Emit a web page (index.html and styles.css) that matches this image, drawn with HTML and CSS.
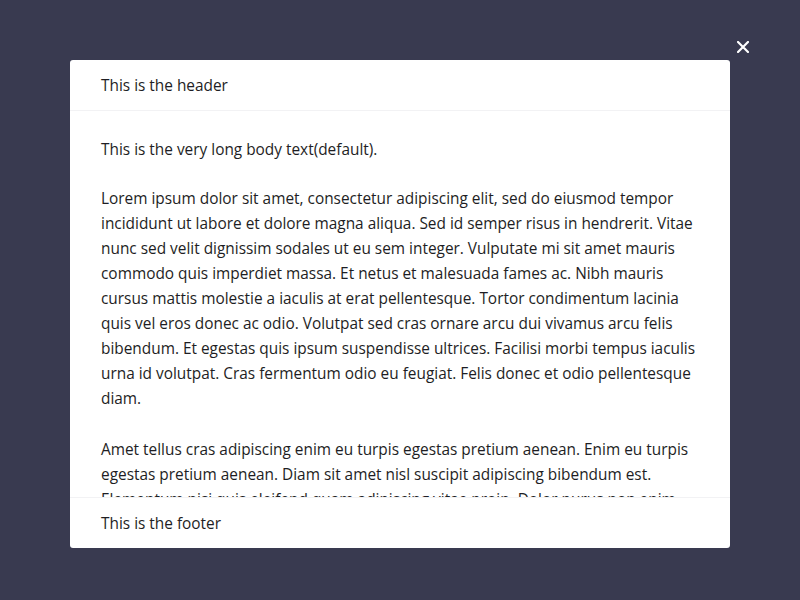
FILE: index.html
```html
<!DOCTYPE html>
<html>
<head>
<meta charset="utf-8">
<link rel="stylesheet" href="styles.css">
</head>
<body>
<div class="overlay">
  <button class="close" aria-label="Close">
    <svg width="12" height="12" viewBox="0 0 12 12"><path d="M1 1L11 11M11 1L1 11" stroke="#fff" stroke-width="2.2" stroke-linecap="square"/></svg>
  </button>
  <div class="modal">
    <div class="modal-header">This is the header</div>
    <div class="modal-body">
      <p class="intro">This is the very long body text(default).</p>
      <p>Lorem ipsum dolor sit amet, consectetur adipiscing elit, sed do eiusmod tempor incididunt ut labore et dolore magna aliqua. Sed id semper risus in hendrerit. Vitae nunc sed velit dignissim sodales ut eu sem integer. Vulputate mi sit amet mauris commodo quis imperdiet massa. Et netus et malesuada fames ac. Nibh mauris cursus mattis molestie a iaculis at erat pellentesque. Tortor condimentum lacinia quis vel eros donec ac odio. Volutpat sed cras ornare arcu dui vivamus arcu felis bibendum. Et egestas quis ipsum suspendisse ultrices. Facilisi morbi tempus iaculis urna id volutpat. Cras fermentum odio eu feugiat. Felis donec et odio pellentesque diam.</p>
      <p>Amet tellus cras adipiscing enim eu turpis egestas pretium aenean. Enim eu turpis egestas pretium aenean. Diam sit amet nisl suscipit adipiscing bibendum est. Elementum nisi quis eleifend quam adipiscing vitae proin. Dolor purus non enim praesent elementum facilisis leo vel fringilla est ullamcorper eget nulla facilisi.</p>
    </div>
    <div class="modal-footer">This is the footer</div>
  </div>
</div>
</body>
</html>
```
FILE: styles.css
```css
html, body {
  margin: 0;
  padding: 0;
  height: 100%;
}
body {
  background: #393a50;
  font-family: "Open Sans", "Liberation Sans", sans-serif;
  font-size: 15.4px;
  line-height: 25px;
  color: #1e1e24;
}
.overlay {
  position: relative;
  height: 100%;
  display: flex;
  justify-content: center;
  align-items: flex-start;
  padding-top: 60px;
  box-sizing: border-box;
}
.close {
  position: absolute;
  top: 41px;
  left: 737px;
  width: 12px;
  height: 12px;
  padding: 0;
  border: 0;
  background: none;
  display: flex;
}
.modal {
  width: 660px;
  height: 488px;
  background: #fff;
  border-radius: 3px;
  display: flex;
  flex-direction: column;
  overflow: hidden;
}
.modal-header {
  padding: 13px 31px 11px;
  height: 26px;
  border-bottom: 1px solid #f2f2f4;
  flex: none;
}
.modal-body {
  flex: 1;
  overflow: hidden;
  padding: 26px 31px 0;
}
.modal-body p {
  margin: 0 0 26px;
}
.modal-body .intro {
  margin-bottom: 24px;
}
.modal-footer {
  flex: none;
  height: 26px;
  padding: 13px 31px 11px;
  border-top: 1px solid #f2f2f4;
}
```
